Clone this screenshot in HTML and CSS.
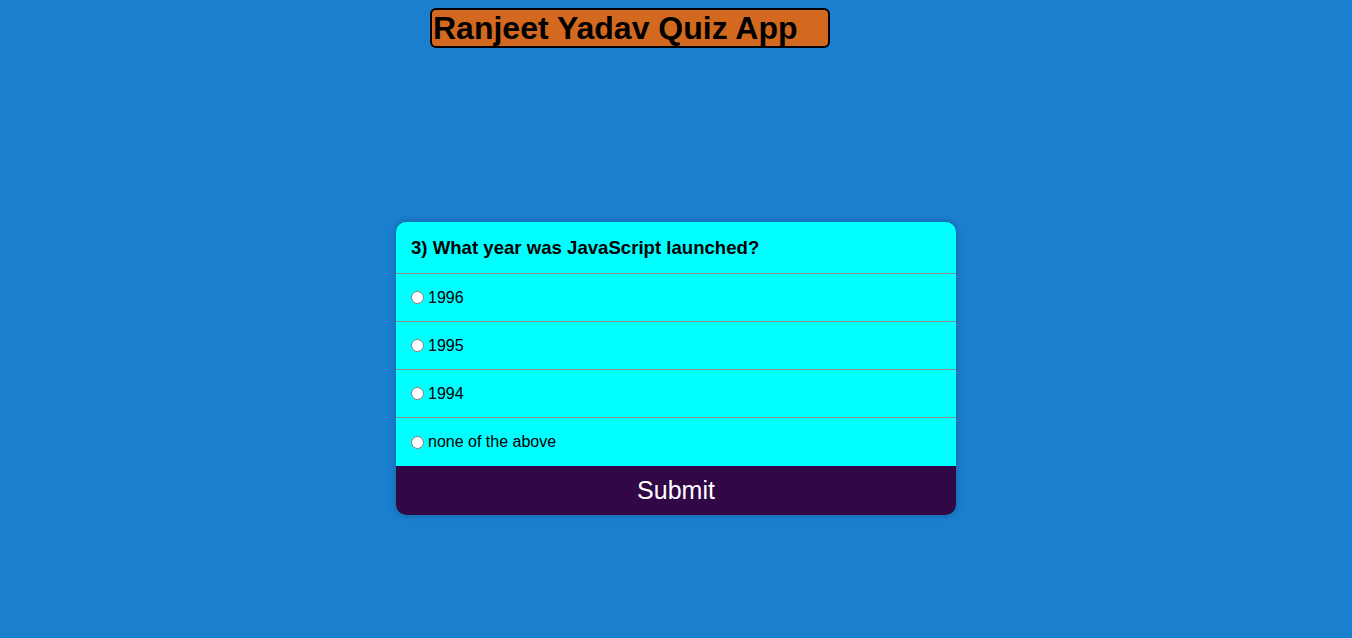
FILE: index.html
```html
<!DOCTYPE html>
<html>
<head>
<meta charset="utf-8">
<link rel="stylesheet" href="styles.css">
</head>
<body>
<h1 class="title">Ranjeet Yadav Quiz App</h1>
<div class="quiz">
  <h2 class="question">3) What year was JavaScript launched?</h2>
  <ul class="options">
    <li class="option"><input type="radio" name="a" id="a1"><label for="a1">1996</label></li>
    <li class="option"><input type="radio" name="a" id="a2"><label for="a2">1995</label></li>
    <li class="option"><input type="radio" name="a" id="a3"><label for="a3">1994</label></li>
    <li class="option"><input type="radio" name="a" id="a4"><label for="a4">none of the above</label></li>
  </ul>
  <button class="submit">Submit</button>
</div>
</body>
</html>
```
FILE: styles.css
```css
html, body {
  margin: 0;
  padding: 0;
}
body {
  background: #1a7fcf;
  font-family: "Liberation Sans", Arial, sans-serif;
  height: 638px;
  padding-top: 8px;
  box-sizing: border-box;
}
.title {
  margin: 0 0 0 430px;
  width: 400px;
  box-sizing: border-box;
  background: #d2691e;
  border: 2px solid #000;
  border-radius: 6px;
  font-size: 32px;
  line-height: 36px;
  font-weight: bold;
  color: #000;
  padding: 0 0 0 1px;
}
.quiz {
  margin: 174px auto 0 396px;
  width: 560px;
  background: #00ffff;
  border-radius: 10px;
  box-shadow: 0 0 6px 1px rgba(0, 0, 0, 0.2);
  overflow: hidden;
}
.question {
  margin: 0;
  height: 52px;
  display: flex;
  align-items: center;
  padding: 0 15px;
  font-size: 18.6px;
  font-weight: bold;
  border-bottom: 1px solid #8a8a8a;
  box-sizing: border-box;
}
.options {
  list-style: none;
  margin: 0;
  padding: 0;
}
.option {
  height: 48px;
  box-sizing: border-box;
  display: flex;
  align-items: center;
  padding-left: 10px;
  font-size: 16px;
  border-bottom: 1px solid #8a8a8a;
}
.option:last-child {
  border-bottom: none;
}
.option input {
  margin: 0 4px 0 5px;
  width: 13px;
  height: 13px;
}
.submit {
  display: block;
  width: 100%;
  height: 49px;
  border: none;
  margin: 0;
  background: #310746;
  color: #fff;
  font-family: "Liberation Sans", Arial, sans-serif;
  font-size: 25px;
  padding: 0;
}
```
